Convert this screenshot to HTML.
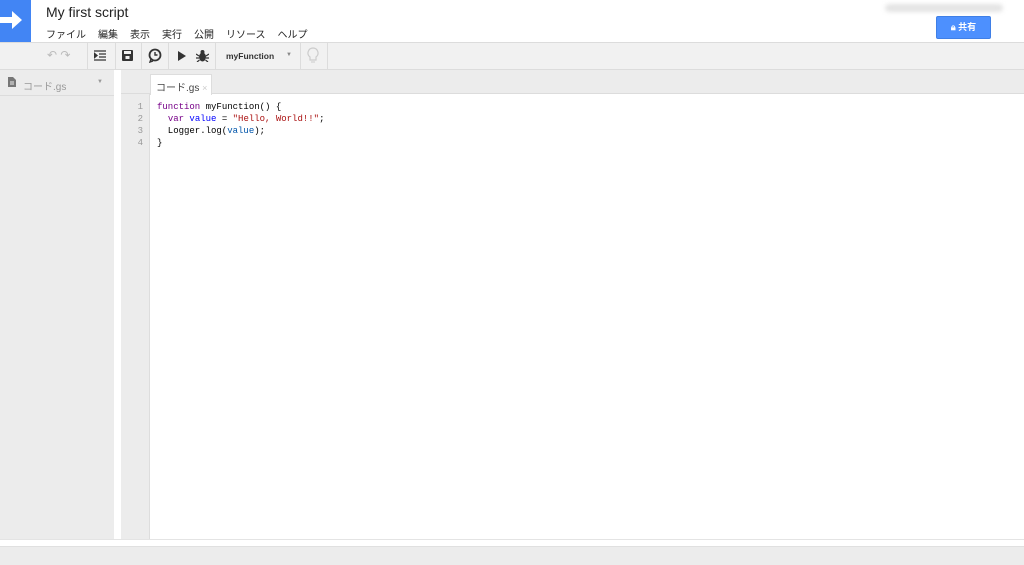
<!DOCTYPE html>
<html><head><meta charset="utf-8"><style>
*{margin:0;padding:0;box-sizing:border-box}
body{width:1024px;height:565px;position:relative;background:#fff;font-family:"Liberation Sans","Noto Sans CJK JP",sans-serif;overflow:hidden}
.a{position:absolute}
.code{font-family:"Liberation Mono",monospace;font-size:9px;line-height:12px}
.sep{position:absolute;top:43px;width:1px;height:27px;background:#dcdcdc}
.m span{margin-right:12px}
</style></head><body>
<div class="a" style="left:0;top:0;width:31px;height:42px;background:#4285f4"></div>
<svg class="a" style="left:0;top:9px" width="24" height="22" viewBox="0 0 24 22"><path d="M0 8h12V2l10 9-10 9v-6H0z" fill="#fff"/></svg>
<div class="a" style="left:46px;top:4px;font-size:14px;color:#222">My first script</div>
<div class="a m" style="left:46px;top:26px;font-size:10px;color:#222;white-space:nowrap"><span>ファイル</span><span>編集</span><span>表示</span><span>実行</span><span>公開</span><span>リソース</span><span>ヘルプ</span></div>
<div class="a" style="left:885px;top:4px;width:118px;height:8px;background:#e4e4e4;border-radius:4px;filter:blur(2px)"></div>
<div class="a" style="left:936px;top:16px;width:55px;height:23px;background:#4d90fe;border:1px solid #3f7fe6;border-radius:2px;color:#fff;font-size:9px;font-weight:bold;line-height:21px;text-align:center">🔒︎ 共有</div>
<div class="a" style="left:0;top:42px;width:1024px;height:28px;background:#f1f1f1;border-top:1px solid #dcdcdc;border-bottom:1px solid #dcdcdc"></div>
<div class="sep" style="left:87px"></div><div class="sep" style="left:115px"></div><div class="sep" style="left:141px"></div><div class="sep" style="left:168px"></div><div class="sep" style="left:215px"></div><div class="sep" style="left:300px"></div><div class="sep" style="left:327px"></div>
<div class="a" style="left:47px;top:48px;font-size:12px;color:#bbb">↶ ↷</div>
<svg class="a" style="left:94px;top:50px" width="12" height="11"><path d="M0 1h12M5 4h7M5 7h7M0 10h12M0 3l3 2.5L0 8z" stroke="#333" stroke-width="1.3" fill="#333"/></svg>
<svg class="a" style="left:122px;top:50px" width="11" height="11"><rect x="0" y="0" width="11" height="11" rx="1" fill="#333"/><rect x="2" y="1" width="7" height="3" fill="#f1f1f1"/><rect x="3.5" y="6" width="4" height="3" fill="#f1f1f1"/></svg>
<svg class="a" style="left:148px;top:48px" width="14" height="15"><circle cx="7" cy="7" r="5.5" stroke="#333" stroke-width="1.8" fill="none"/><path d="M7 4v3h2.5M3 11l-1 3 3-1" stroke="#333" stroke-width="1.4" fill="none"/></svg>
<svg class="a" style="left:178px;top:51px" width="9" height="10"><path d="M0 0l8 5-8 5z" fill="#333"/></svg>
<svg class="a" style="left:196px;top:49px" width="13" height="13"><ellipse cx="6.5" cy="8" rx="3.5" ry="4.5" fill="#333"/><circle cx="6.5" cy="3" r="2" fill="#333"/><path d="M0 5l3 2M13 5l-3 2M0 9h3M13 9h-3M1 13l2.5-2M12 13l-2.5-2" stroke="#333" stroke-width="1.2"/></svg>
<div class="a" style="left:226px;top:51px;font-size:8.5px;font-weight:bold;color:#333">myFunction</div>
<div class="a" style="left:286px;top:52px;font-size:6px;color:#888">▼</div>
<svg class="a" style="left:307px;top:47px" width="12" height="18"><path d="M6 1a5 5 0 0 0-3 9v3h6v-3a5 5 0 0 0-3-9z" stroke="#ccc" fill="none" stroke-width="1.2"/><path d="M4 15h4" stroke="#ccc"/></svg>
<div class="a" style="left:0;top:70px;width:114px;height:469px;background:#ececec"></div>
<div class="a" style="left:0;top:95px;width:114px;height:1px;background:#dcdcdc"></div>
<svg class="a" style="left:8px;top:77px" width="8" height="10"><path d="M0 0h5l3 3v7H0z" fill="#777"/><path d="M2 5h4M2 7h4" stroke="#ececec"/></svg>
<div class="a" style="left:23px;top:78px;font-size:10px;color:#999">コード.gs</div>
<div class="a" style="left:97px;top:79px;font-size:6px;color:#999">▼</div>
<div class="a" style="left:121px;top:70px;width:903px;height:24px;background:#ececec;border-bottom:1px solid #dcdcdc"></div>
<div class="a" style="left:121px;top:94px;width:29px;height:445px;background:#ececec;border-right:1px solid #ddd"></div>
<div class="a" style="left:150px;top:74px;width:62px;height:21px;background:#fff;border:1px solid #ddd;border-bottom:none;font-size:10px;color:#444;padding:4px 0 0 5px">コード.gs <span style="color:#ccc;font-size:9px">×</span></div>
<div class="a code" style="left:121px;top:101px;width:22px;text-align:right;color:#999">1<br>2<br>3<br>4</div>
<div class="a code" style="left:157px;top:101px;color:#000;white-space:pre"><span style="color:#708">function</span> myFunction() {
  <span style="color:#708">var</span> <span style="color:#00f">value</span> = <span style="color:#a11">"Hello, World!!"</span>;
  Logger.log(<span style="color:#05a">value</span>);
}</div>
<div class="a" style="left:0;top:539px;width:1024px;height:1px;background:#e4e4e4"></div>
<div class="a" style="left:0;top:546px;width:1024px;height:19px;background:#ececec;border-top:1px solid #e0e0e0"></div>
</body></html>
